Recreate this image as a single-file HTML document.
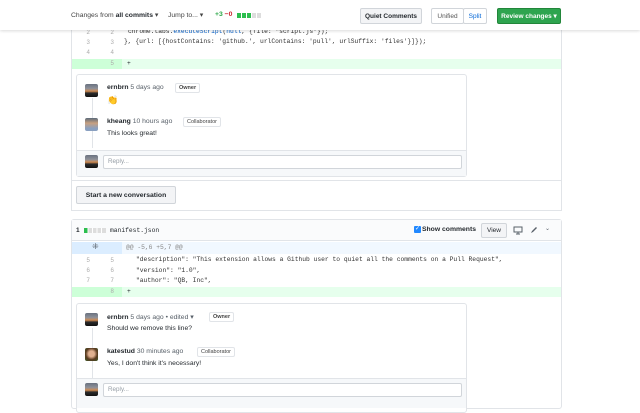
<!DOCTYPE html>
<html><head><meta charset="utf-8"><style>
*{box-sizing:border-box;margin:0;padding:0}
body{width:640px;height:400px;overflow:hidden;background:#fff;font-family:"Liberation Sans",sans-serif;font-size:7px;color:#24292e;position:relative}
.a{position:absolute}
.mono{font-family:"Liberation Mono",monospace;font-size:6.3px}
.btn{position:absolute;border:1px solid #d1d5da;border-radius:2px;background:#f3f4f6;font-size:6.5px;font-weight:bold;display:flex;align-items:center;justify-content:center}
.ln{position:absolute;color:#aaa;font-family:"Liberation Mono",monospace;font-size:6px;text-align:right;width:10px}
.av{position:absolute;width:13px;height:13px;border-radius:2px;background:linear-gradient(#6a7280 0%,#8f9199 35%,#d08a50 55%,#2a2a2a 70%,#111 100%)}
.badge{position:absolute;border:1px solid #e1e4e8;border-radius:2px;font-size:5.5px;padding:1px 3px;color:#444;background:#fff}
.name{position:absolute;font-size:6.8px}
.name b{font-weight:bold}
.name span{color:#586069}
.reply{position:absolute;border:1px solid #d1d5da;background:#fff;font-size:6.3px;color:#959da5;padding:2px 4px;height:14px;border-radius:2px}
</style></head><body>
<!-- top bar -->
<div class="a" style="left:0;top:0;width:640px;height:30px;background:#fff;box-shadow:0 1px 3px rgba(0,0,0,.15);z-index:5">
<div class="a" style="left:71px;top:11px;font-size:6.8px;color:#444">Changes from <b style="color:#24292e">all commits</b> ▾</div>
<div class="a" style="left:168px;top:11px;font-size:6.8px;color:#444">Jump to... ▾</div>
<div class="a" style="left:215px;top:11px;font-size:6.8px;font-weight:bold"><span style="color:#28a745">+3</span> <span style="color:#cb2431">−0</span></div>
<div class="a" style="left:237px;top:13px;width:24px;height:5px;background:linear-gradient(90deg,#2cbe4e 0 4px,#fff 4px 5px,#2cbe4e 5px 9px,#fff 9px 10px,#2cbe4e 10px 14px,#fff 14px 15px,#ddd 15px 19px,#fff 19px 20px,#ddd 20px 24px)"></div>
<div class="btn" style="left:360px;top:8px;width:62px;height:16px">Quiet Comments</div>
<div class="btn" style="left:431px;top:8px;width:33px;height:16px;background:#fff;color:#555;font-weight:normal">Unified</div>
<div class="btn" style="left:463px;top:8px;width:24px;height:16px;background:#fff;color:#0366d6;font-weight:normal">Split</div>
<div class="btn" style="left:497px;top:8px;width:64px;height:16px;background:#2ea44f;border-color:#22863a;color:#fff">Review changes ▾</div>
</div>
<!-- file 1 -->
<div class="a" style="left:71px;top:0;width:491px;height:211px;border:1px solid #e1e4e8;border-top:none"></div>
<div class="ln" style="left:80px;top:29px">2</div><div class="ln" style="left:104px;top:29px">2</div>
<div class="a mono" style="left:128px;top:28px;color:#333">chrome.tabs.<span style="color:#005cc5">executeScript</span>(<span style="color:#005cc5">null</span>, {file: "script.js"});</div>
<div class="ln" style="left:80px;top:39px">3</div><div class="ln" style="left:104px;top:39px">3</div>
<div class="a mono" style="left:124px;top:38px;color:#333">}, {url: [{hostContains: 'github.', urlContains: 'pull', urlSuffix: 'files'}]});</div>
<div class="ln" style="left:80px;top:49px">4</div><div class="ln" style="left:104px;top:49px">4</div>
<div class="a" style="left:72px;top:59px;width:489px;height:10px;background:#e6ffed"></div>
<div class="a" style="left:72px;top:59px;width:50px;height:10px;background:#cdffd8"></div>
<div class="ln" style="left:104px;top:60px">5</div>
<div class="a mono" style="left:127px;top:60px">+</div>
<!-- comment box 1 -->
<div class="a" style="left:76px;top:74px;width:391px;height:103px;border:1px solid #e1e4e8;border-radius:3px;background:#fff"></div>
<div class="a" style="left:92px;top:98px;width:1px;height:50px;background:#e1e4e8"></div>
<div class="av" style="left:85px;top:84px"></div>
<div class="name" style="left:107px;top:84px"><b>ernbrn</b> <span>5 days ago</span></div>
<div class="badge" style="left:175px;top:83px;font-weight:bold">Owner</div>
<div class="a" style="left:107px;top:95px;font-size:9px">👏</div>
<div class="av" style="left:85px;top:118px;background:linear-gradient(#5b6b7a,#c8a080 40%,#8aa0c0 80%)"></div>
<div class="name" style="left:107px;top:118px"><b>kheang</b> <span>10 hours ago</span></div>
<div class="badge" style="left:183px;top:117px">Collaborator</div>
<div class="a" style="left:107px;top:130px;font-size:6.8px">This looks great!</div>
<div class="a" style="left:77px;top:150px;width:389px;height:26px;background:#f6f8fa;border-top:1px solid #e1e4e8"></div>
<div class="av" style="left:85px;top:155px"></div>
<div class="reply" style="left:103px;top:155px;width:359px">Reply...</div>
<div class="a" style="left:72px;top:180px;width:489px;height:1px;background:#e1e4e8"></div>
<div class="btn" style="left:76px;top:186px;width:100px;height:18px;font-size:6.8px">Start a new conversation</div>
<!-- file 2 -->
<div class="a" style="left:71px;top:219px;width:491px;height:190px;border:1px solid #e1e4e8;border-radius:3px"></div>
<div class="a" style="left:72px;top:220px;width:489px;height:21px;background:#fafbfc;border-bottom:1px solid #e1e4e8"></div>
<div class="a" style="left:76px;top:227px;font-size:6.5px;font-weight:bold">1</div>
<div class="a" style="left:84px;top:228px;width:22px;height:5px;background:linear-gradient(90deg,#2cbe4e 0 3.5px,#fff 3.5px 4.5px,#ddd 4.5px 8px,#fff 8px 9px,#ddd 9px 12.5px,#fff 12.5px 13.5px,#ddd 13.5px 17px,#fff 17px 18px,#ddd 18px 22px)"></div>
<div class="a mono" style="left:110px;top:227px">manifest.json</div>
<div class="a" style="left:414px;top:226px;width:7px;height:7px;background:#2188ff;border-radius:1px;color:#fff;font-size:6px;line-height:7px;text-align:center">✓</div>
<div class="a" style="left:422px;top:226px;font-size:6.8px;font-weight:bold">Show comments</div>
<div class="btn" style="left:481px;top:223px;width:26px;height:15px;font-weight:normal">View</div>
<svg class="a" style="left:513px;top:226px" width="10" height="9" viewBox="0 0 10 9"><rect x="1" y="1" width="8" height="5" fill="none" stroke="#586069" stroke-width="1"/><path d="M3 8h4M5 6v2" stroke="#586069"/></svg>
<svg class="a" style="left:530px;top:226px" width="8" height="8" viewBox="0 0 8 8"><path d="M1 7l1-2 4-4 1 1-4 4z" fill="#586069"/></svg>
<div class="a" style="left:545px;top:225px;font-size:6px;color:#586069">⌄</div>
<div class="a" style="left:72px;top:242px;width:489px;height:12px;background:#f1f8ff"></div>
<div class="a" style="left:72px;top:242px;width:50px;height:12px;background:#dbedff"></div>
<div class="a" style="left:92px;top:242px;font-size:8px;color:#586069">⁜</div>
<div class="a mono" style="left:126px;top:244px;color:#888">@@ -5,6 +5,7 @@</div>
<div class="ln" style="left:80px;top:257px">5</div><div class="ln" style="left:104px;top:257px">5</div>
<div class="a mono" style="left:136px;top:256px;color:#333">"description": "This extension allows a Github user to quiet all the comments on a Pull Request",</div>
<div class="ln" style="left:80px;top:267px">6</div><div class="ln" style="left:104px;top:267px">6</div>
<div class="a mono" style="left:136px;top:267px;color:#333">"version": "1.0",</div>
<div class="ln" style="left:80px;top:277px">7</div><div class="ln" style="left:104px;top:277px">7</div>
<div class="a mono" style="left:136px;top:277px;color:#333">"author": "QB, Inc",</div>
<div class="a" style="left:72px;top:287px;width:489px;height:10px;background:#e6ffed"></div>
<div class="a" style="left:72px;top:287px;width:50px;height:10px;background:#cdffd8"></div>
<div class="ln" style="left:104px;top:288px">8</div>
<div class="a mono" style="left:127px;top:288px">+</div>
<div class="a" style="left:76px;top:303px;width:391px;height:110px;border:1px solid #e1e4e8;border-radius:3px;background:#fff"></div>
<div class="a" style="left:92px;top:328px;width:1px;height:50px;background:#e1e4e8"></div>
<div class="av" style="left:85px;top:313px"></div>
<div class="name" style="left:107px;top:313px"><b>ernbrn</b> <span>5 days ago • edited ▾</span></div>
<div class="badge" style="left:209px;top:312px;font-weight:bold">Owner</div>
<div class="a" style="left:107px;top:325px;font-size:6.8px">Should we remove this line?</div>
<div class="av" style="left:85px;top:348px;background:radial-gradient(circle at 50% 45%,#e0b090 30%,#5a3a20 60%,#3a5a2a 100%)"></div>
<div class="name" style="left:107px;top:348px"><b>katestud</b> <span>30 minutes ago</span></div>
<div class="badge" style="left:197px;top:347px">Collaborator</div>
<div class="a" style="left:107px;top:360px;font-size:6.8px">Yes, I don't think it's necessary!</div>
<div class="a" style="left:77px;top:378px;width:389px;height:30px;background:#f6f8fa;border-top:1px solid #e1e4e8"></div>
<div class="av" style="left:85px;top:383px"></div>
<div class="reply" style="left:103px;top:383px;width:359px">Reply...</div>
</body></html>
